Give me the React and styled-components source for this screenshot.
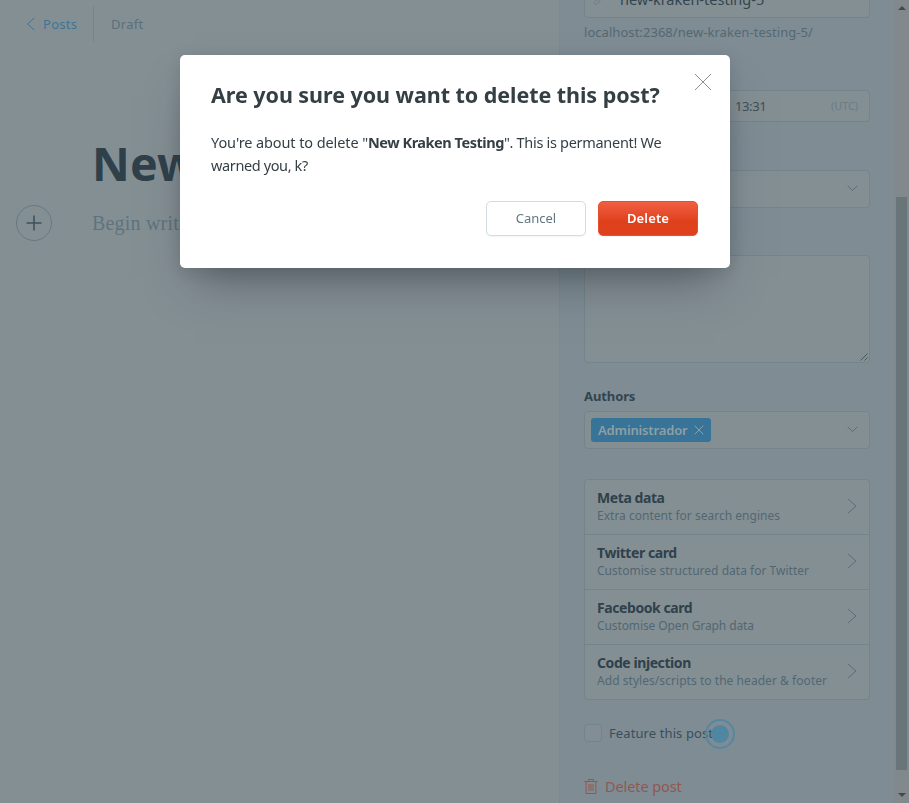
import React from "react";
import styled, { createGlobalStyle } from "styled-components";

const line = "#73848d";

const Global = createGlobalStyle`
  * { box-sizing: border-box; }
  html, body { margin: 0; height: 100%; overflow: hidden; }
  body {
    font-family: "Noto Sans", "Open Sans", sans-serif;
    background: #848f94;
    color: #33454e;
  }
  button { font-family: inherit; cursor: pointer; }
  svg { display: block; flex: none; }
`;

const Page = styled.div`
  display: flex;
  width: 909px;
  height: 803px;
  overflow: hidden;
`;

const Editor = styled.main`
  width: 559px;
  flex: none;
  overflow: hidden;
`;

const TopBar = styled.header`
  display: flex;
  align-items: center;
  height: 48px;
  padding-left: 26px;
  font-size: 13px;
  letter-spacing: 0.28px;
`;

const BackLink = styled.a`
  display: flex;
  align-items: center;
  gap: 8px;
  width: 67px;
  color: #3d7594;
`;

const Status = styled.span`
  display: flex;
  align-items: center;
  height: 36px;
  padding-left: 17px;
  border-left: 1px solid ${line};
  color: #5b6f79;
`;

const Title = styled.h1`
  margin: 81px 0 0 92px;
  font-size: 46.5px;
  line-height: 68px;
  font-weight: 700;
  letter-spacing: 0.2px;
  white-space: nowrap;
  color: #2f404a;
`;

const BodyRow = styled.div`
  display: flex;
  align-items: center;
  gap: 40px;
  margin: 8px 0 0 16px;
  white-space: nowrap;
`;

const PlusButton = styled.button`
  display: grid;
  place-items: center;
  width: 36px;
  height: 36px;
  padding: 0;
  border: 1px solid #667982;
  border-radius: 50%;
  background: none;
  color: #3f525c;
`;

const Placeholder = styled.p`
  margin: 0;
  font: 20px/30px "Liberation Serif", serif;
  letter-spacing: 0.2px;
  color: #5f737d;
`;

const Settings = styled.aside`
  width: 335px;
  flex: none;
  height: 803px;
  overflow: hidden;
  padding: 0 24px;
  border-left: 1px solid #778991;
  background: #7f8c94;
`;

const Field = styled.div`
  display: flex;
  align-items: center;
  width: 286px;
  height: ${(p) => p.$h}px;
  margin-top: ${(p) => p.$mt || 0}px;
  padding: 0 11px 0 ${(p) => p.$pl || 10}px;
  border: 1px solid ${line};
  border-radius: 4px;
  background: #848f94;
`;

const SlugValue = styled.span`
  margin-left: 16px;
  font-size: 14.5px;
  color: #33454e;
`;

const Hint = styled.p`
  margin: 3px 0 0;
  font-size: 13px;
  line-height: 22px;
  letter-spacing: 0.05px;
  white-space: nowrap;
  color: #546973;
`;

const Time = styled.span`
  margin-left: 140px;
  font-size: 13px;
  letter-spacing: -0.4px;
  color: #3b4e58;
`;

const Zone = styled.span`
  margin: -2px 0 0 auto;
  font-size: 11px;
  letter-spacing: -0.12px;
  color: #6a7c86;
`;

const Spacer = styled.span`
  flex: 1;
`;

const TextArea = styled.div`
  display: flex;
  align-items: flex-end;
  justify-content: flex-end;
  width: 286px;
  height: 108px;
  margin-top: 47px;
  border: 1px solid ${line};
  border-radius: 4px;
  background: #848f94;
`;

const Label = styled.div`
  margin-top: 23px;
  font-size: 13px;
  line-height: 20px;
  font-weight: 700;
  letter-spacing: -0.1px;
  color: #33454e;
`;

const Tag = styled.span`
  display: flex;
  align-items: center;
  justify-content: space-between;
  width: 120px;
  height: 24px;
  padding: 0 7px;
  border-radius: 3px;
  background: #377498;
  color: #929ea4;
  font-size: 13px;
  font-weight: 600;
  letter-spacing: -0.15px;
`;

const List = styled.ul`
  width: 286px;
  margin: 30px 0 0;
  padding: 0;
  list-style: none;
  border: 1px solid ${line};
  border-radius: 4px;
  background: #848f94;
`;

const Item = styled.li`
  display: flex;
  align-items: center;
  justify-content: space-between;
  height: ${(p) => (p.$last ? 54 : 55)}px;
  padding: 0 12px 3px;
  border-bottom: ${(p) => (p.$last ? "none" : `1px solid ${line}`)};
`;

const ItemTitle = styled.div`
  font-size: 14px;
  line-height: 19px;
  font-weight: 700;
  letter-spacing: -0.42px;
  color: #2f414b;
`;

const ItemText = styled.div`
  font-size: 12px;
  line-height: 17px;
  letter-spacing: ${(p) => p.$track || 0}px;
  white-space: nowrap;
  color: #526771;
`;

const FeatureRow = styled.div`
  display: flex;
  align-items: center;
  height: 30px;
  margin-top: 19px;
  font-size: 13px;
  letter-spacing: 0.1px;
  color: #3b4e58;
`;

const FeatureLabel = styled.span`
  margin-top: -2px;
`;

const Checkbox = styled.span`
  width: 18px;
  height: 18px;
  margin: -2px 7px 0 0;
  border: 1px solid ${line};
  border-radius: 4px;
  background: #828e94;
`;

const Beacon = styled.span`
  display: grid;
  place-items: center;
  width: 30px;
  height: 30px;
  margin-left: -8px;
  border: 2px solid #5588a0;
  border-radius: 50%;

  &::after {
    content: "";
    width: 18px;
    height: 18px;
    border-radius: 50%;
    background: #4f87a3;
  }
`;

const DeletePost = styled.div`
  display: flex;
  align-items: center;
  gap: 7px;
  height: 24px;
  margin-top: 25px;
  font-size: 14.5px;
  letter-spacing: -0.1px;
  color: #925850;
`;

const Scroll = styled.div`
  display: flex;
  flex-direction: column;
  align-items: center;
  width: 15px;
  height: 803px;
  padding: 6px 0;
  background: #81898d;
  color: #424a4e;
`;

const Thumb = styled.div`
  width: 11px;
  height: 573px;
  margin: 187px 0 23px 0;
  background: #6a757a;
`;

const Layer = styled.div`
  position: fixed;
  inset: 0;
  padding: 55px 0 0 180px;
`;

const Dialog = styled.section`
  position: relative;
  width: 550px;
  height: 213px;
  padding: 24px 32px 32px 31px;
  border-radius: 5px;
  background: #fff;
  box-shadow: 0 26px 44px -16px rgba(40, 46, 52, 0.5), 0 4px 18px rgba(40, 50, 56, 0.16);
`;

const DialogTitle = styled.h2`
  margin: 0;
  font-size: 21.5px;
  line-height: 32px;
  font-weight: 700;
  letter-spacing: -0.05px;
  white-space: nowrap;
  color: #343f44;
`;

const DialogText = styled.p`
  margin: 20px 0 0;
  font-size: 14.5px;
  line-height: 23px;
  white-space: nowrap;
  color: #343f44;
`;

const Run = styled.span`
  letter-spacing: ${(p) => p.$track}px;
  font-weight: ${(p) => (p.$bold ? 700 : 400)};
`;

const Close = styled.button`
  position: absolute;
  top: 18px;
  right: 18px;
  width: 18px;
  height: 18px;
  padding: 0;
  border: 0;
  background: none;
  color: #8d9396;
`;

const Actions = styled.div`
  display: flex;
  justify-content: flex-end;
  gap: 12px;
  margin-top: 24px;
`;

const Button = styled.button`
  width: 100px;
  height: 35px;
  padding: 0 0 2px;
  border-radius: 5px;
  font-size: 13px;
  border: 1px solid ${(p) => (p.$danger ? "#e8512f" : "#d2dde1")};
  font-weight: ${(p) => (p.$danger ? 600 : 400)};
  letter-spacing: ${(p) => (p.$danger ? 0.14 : 0)}px;
  color: ${(p) => (p.$danger ? "#fff" : "#617781")};
  background: ${(p) =>
    p.$danger ? "linear-gradient(#f05f41, #df401c 60%, #e0401c)" : "#fff"};
  box-shadow: 0 1px 1px rgba(0, 0, 0, 0.04);
`;

const Stroke = ({ w, h, d, width = 1, color = "currentColor" }) => (
  <svg width={w} height={h} viewBox={`0 0 ${w} ${h}`} fill="none" stroke={color} strokeWidth={width}>
    <path d={d} />
  </svg>
);

const Chevron = () => <Stroke w={11} h={8} d="M.7.8 5.5 5.6 10.3.8" color="#596d77" />;

const Trash = () => (
  <svg width="14" height="15" viewBox="0 0 14 15" fill="none" stroke="currentColor">
    <path d="M.3 2.5h13.4M4.5 2.5v-2h5v2M2.100 2.500v12h9.800v-12M5 5v7M7 5v7M9 5v7" />
  </svg>
);

const Link = () => (
  <svg width="11" height="11" viewBox="0 0 11 11" fill="none" stroke="#6c7f88" strokeWidth=".9">
    <path d="M4.2 4.2 6.5 1.8c2-1.7 4.3.5 2.8 2.5L7 6.7c-1 .9-2 .8-2.8 0M6.8 5.2C6 4.2 5 4.2 4 5.2L1.7 7.5c-1.4 2 .8 3.9 2.6 2.5l2.4-2.4" />
  </svg>
);

const cards = [
  ["Meta data", "Extra content for search engines", 0.01],
  ["Twitter card", "Customise structured data for Twitter", 0.02],
  ["Facebook card", "Customise Open Graph data", -0.11],
  ["Code injection", "Add styles/scripts to the header & footer", 0.05],
];

export default function App() {
  return (
    <>
      <Global />
      <Page>
        <Editor>
          <TopBar>
            <BackLink>
              <Stroke w={9} h={14} d="M8.3 1 1.5 7l6.8 6" />
              Posts
            </BackLink>
            <Status>Draft</Status>
          </TopBar>
          <Title>New Kraken Testing</Title>
          <BodyRow>
            <PlusButton aria-label="Add">
              <Stroke w={16} h={16} d="M8 .5v15M.5 8h15" width={1.6} />
            </PlusButton>
            <Placeholder>Begin writing your post...</Placeholder>
          </BodyRow>
        </Editor>

        <Settings>
          <Field $h={38} $mt={-20} $pl={8}>
            <Link />
            <SlugValue>new-kraken-testing-5</SlugValue>
          </Field>
          <Hint>localhost:2368/new-kraken-testing-5/</Hint>
          <Field $h={32} $mt={47}>
            <Time>13:31</Time>
            <Zone>(UTC)</Zone>
          </Field>
          <Field $h={38} $mt={48}>
            <Spacer />
            <Chevron />
          </Field>
          <TextArea>
            <Stroke w={10} h={10} d="M1.5 8.5l7-7M5.5 8.500l3-3" color="#4b565b" />
          </TextArea>
          <Label>Authors</Label>
          <Field $h={38} $mt={5} $pl={6}>
            <Tag>
              Administrador
              <Stroke w={10} h={10} d="M.7.7l8.6 8.6M9.3.7.7 9.3" />
            </Tag>
            <Spacer />
            <Chevron />
          </Field>
          <List>
            {cards.map(([title, text, track], i) => (
              <Item key={title} $last={i === cards.length - 1}>
                <div>
                  <ItemTitle>{title}</ItemTitle>
                  <ItemText $track={track}>{text}</ItemText>
                </div>
                <Stroke w={10} h={16} d="M1 1l8 7-8 7" color="#596d77" />
              </Item>
            ))}
          </List>
          <FeatureRow>
            <Checkbox />
            <FeatureLabel>Feature this post</FeatureLabel>
            <Beacon />
          </FeatureRow>
          <DeletePost>
            <Trash />
            Delete post
          </DeletePost>
        </Settings>

        <Scroll>
          <svg width="8" height="4" viewBox="0 0 8 4"><path d="M0 4l4-4 4 4z" fill="currentColor" /></svg>
          <Thumb />
          <svg width="8" height="4" viewBox="0 0 8 4"><path d="M0 0h8L4 4z" fill="currentColor" /></svg>
        </Scroll>
      </Page>

      <Layer>
        <Dialog role="dialog">
          <Close aria-label="Close">
            <Stroke w={18} h={18} d="M1 1l16 16M17 1 1 17" />
          </Close>
          <DialogTitle>Are you sure you want to delete this post?</DialogTitle>
          <DialogText>
            <Run $track={-0.1}>You're about to delete "</Run>
            <Run $bold $track={-0.46}>New Kraken Testing</Run>
            <Run $track={-0.3}>". This is permanent! We</Run>
            <br />
            <Run $track={-0.38}>warned you, k?</Run>
          </DialogText>
          <Actions>
            <Button>Cancel</Button>
            <Button $danger>Delete</Button>
          </Actions>
        </Dialog>
      </Layer>
    </>
  );
}
